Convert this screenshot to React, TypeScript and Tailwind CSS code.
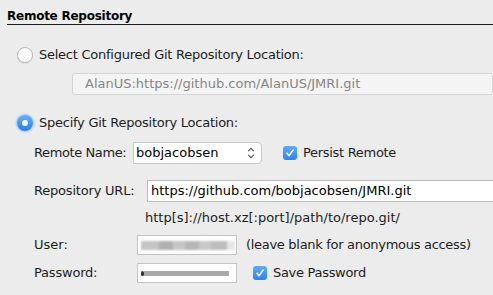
import React from "react";

function Radio({ checked }: { checked: boolean }) {
  if (checked) {
    return (
      <div className="w-[16px] h-[16px] rounded-full bg-gradient-to-b from-[#69b1fa] to-[#1f7ff5] shadow-[0_0_2px_1px_rgba(80,150,250,0.5)] flex items-center justify-center">
        <div className="w-[6px] h-[6px] rounded-full bg-white" />
      </div>
    );
  }
  return (
    <div className="w-[16px] h-[16px] rounded-full bg-white border border-[#b9b9b9] shadow-[0_1px_1px_rgba(0,0,0,0.08)]" />
  );
}

function Check() {
  return (
    <div className="w-[14px] h-[14px] rounded-[3px] bg-gradient-to-b from-[#5fa9fa] to-[#2a83f6] flex items-center justify-center">
      <svg width="10" height="10" viewBox="0 0 10 10">
        <path d="M2 5.3 L4.1 7.6 L8 2.2" stroke="white" strokeWidth="1.6" fill="none" strokeLinecap="round" strokeLinejoin="round" />
      </svg>
    </div>
  );
}

export default function App() {
  return (
    <div
      className="w-[493px] h-[295px] bg-[#ececec] overflow-hidden text-[13px] text-[#1d1d1d]"
      style={{ fontFamily: '"DejaVu Sans", "Noto Sans", sans-serif' }}
    >
      <div className="ml-[7px] h-[25px] pt-[8px] border-b border-[#1a1a1a] font-bold text-[12px] tracking-[-0.25px] leading-[16px] text-black">
        Remote Repository
      </div>

      <div className="mt-[20px] h-[20px] flex items-center pl-[17px]">
        <Radio checked={false} />
        <span className="ml-[6px] leading-[16px] tracking-[-0.25px]">Select Configured Git Repository Location:</span>
      </div>

      <div className="mt-[8px] ml-[72px] h-[22px] border border-[#d6d6d6] rounded-[3px] bg-[#f4f4f4] flex items-center pl-[12px] text-[#868686] leading-[16px]">
        AlanUS:https://github.com/AlanUS/JMRI.git
      </div>

      <div className="mt-[18px] h-[20px] flex items-center pl-[17px]">
        <Radio checked={true} />
        <span className="ml-[6px] leading-[16px] tracking-[-0.25px]">Specify Git Repository Location:</span>
      </div>

      <div className="mt-[9px] h-[22px] flex items-center pl-[34px]">
        <span className="w-[99px] leading-[16px] tracking-[-0.4px]">Remote Name:</span>
        <div className="w-[129px] h-[22px] bg-white border border-[#c8c8c8] rounded-r-[4px] flex items-center pl-[2px] justify-between pr-[6px]">
          <span className="leading-[16px] text-black">bobjacobsen</span>
          <svg width="8" height="12" viewBox="0 0 8 12">
            <path d="M1.2 4.2 L4 1.4 L6.8 4.2 M1.2 7.8 L4 10.6 L6.8 7.8" stroke="#555" strokeWidth="1.1" fill="none" />
          </svg>
        </div>
        <div className="ml-[21px]">
          <Check />
        </div>
        <span className="ml-[6px] leading-[16px] tracking-[-0.3px]">Persist Remote</span>
      </div>

      <div className="mt-[16px] h-[22px] flex items-center pl-[34px]">
        <span className="w-[113px] leading-[16px] tracking-[-0.2px]">Repository URL:</span>
        <div className="flex-1 h-[22px] bg-white border border-[#bcbcbc] border-r-0 flex items-center pl-[3px] leading-[16px] text-black">
          https://github.com/bobjacobsen/JMRI.git
        </div>
      </div>

      <div className="mt-[6px] h-[20px] flex items-center pl-[145px] leading-[16px]">
        http[s]://host.xz[:port]/path/to/repo.git/
      </div>

      <div className="mt-[7px] h-[20px] flex items-center pl-[34px]">
        <span className="w-[103px] leading-[16px]">User:</span>
        <div className="w-[100px] h-[20px] bg-white border border-[#c4c4c4] flex items-center pl-[3px] overflow-hidden">
          <div className="flex h-[9px] blur-[1px]">
            <div className="w-[18px] bg-[#c4c4c4]" />
            <div className="w-[14px] bg-[#b0b0b0]" />
            <div className="w-[12px] bg-[#c6c6c6]" />
            <div className="w-[14px] bg-[#b6b6b6]" />
            <div className="w-[12px] bg-[#c8c8c8]" />
            <div className="w-[16px] bg-[#bdbdbd]" />
            <div className="w-[8px] bg-[#e6e6e6]" />
          </div>
        </div>
        <span className="ml-[9px] leading-[16px] tracking-[-0.3px]">(leave blank for anonymous access)</span>
      </div>

      <div className="mt-[8px] h-[20px] flex items-center pl-[34px]">
        <span className="w-[103px] leading-[16px] tracking-[-0.2px]">Password:</span>
        <div className="w-[100px] h-[20px] bg-white border border-[#c4c4c4] flex items-center pl-[3px] overflow-hidden">
          <div className="flex items-center blur-[0.6px]">
            <div className="w-[3px] h-[5px] rounded-full bg-[#333]" />
            <div className="w-[85px] h-[5px] bg-[#a9a9a9]" />
          </div>
        </div>
        <div className="ml-[16px]">
          <Check />
        </div>
        <span className="ml-[6px] leading-[16px] tracking-[-0.3px]">Save Password</span>
      </div>
    </div>
  );
}
